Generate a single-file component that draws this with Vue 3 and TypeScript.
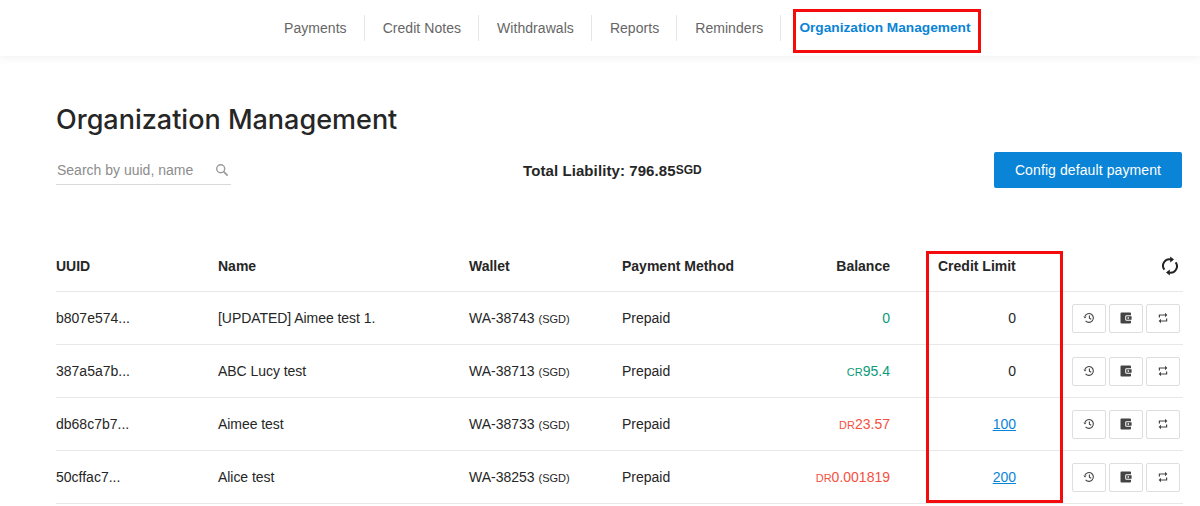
<script setup lang="ts">
interface Row {
  uuid: string
  name: string
  wallet: string
  prefix: string
  balance: string
  tone: string
  limit: string
  linked: boolean
}
const tabs: string[] = ['Payments', 'Credit Notes', 'Withdrawals', 'Reports', 'Reminders']
const rows: Row[] = [
  { uuid: 'b807e574...', name: '[UPDATED] Aimee test 1.', wallet: 'WA-38743', prefix: '', balance: '0', tone: 'pos', limit: '0', linked: false },
  { uuid: '387a5a7b...', name: 'ABC Lucy test', wallet: 'WA-38713', prefix: 'CR', balance: '95.4', tone: 'pos', limit: '0', linked: false },
  { uuid: 'db68c7b7...', name: 'Aimee test', wallet: 'WA-38733', prefix: 'DR', balance: '23.57', tone: 'neg', limit: '100', linked: true },
  { uuid: '50cffac7...', name: 'Alice test', wallet: 'WA-38253', prefix: 'DR', balance: '0.001819', tone: 'neg', limit: '200', linked: true },
]
</script>

<template>
  <div class="page">
    <nav class="nav">
      <a v-for="t in tabs" :key="t" class="tab">{{ t }}</a>
      <a class="tab active">Organization Management</a>
    </nav>
    <div class="mark mark-nav"></div>
    <div class="mark mark-col"></div>

    <main class="content">
      <h1 class="title">Organization Management</h1>
      <div class="toolbar">
        <div class="search">
          <span class="placeholder">Search by uuid, name</span>
          <svg width="14" height="14" viewBox="0 0 14 14" fill="none" stroke="#9a9a9a" stroke-width="1.4">
            <circle cx="5.7" cy="5.7" r="4" />
            <path d="M8.7 8.7 L12.6 12.6" stroke-width="1.7" />
          </svg>
        </div>
        <div class="total">Total Liability: 796.85<span class="cur">SGD</span></div>
        <button class="primary">Config default payment</button>
      </div>

      <div class="table">
        <div class="row head">
          <div>UUID</div>
          <div>Name</div>
          <div>Wallet</div>
          <div>Payment Method</div>
          <div class="right">Balance</div>
          <div class="limit-head">Credit Limit</div>
          <div class="actions">
            <svg class="sync" width="16" height="20" viewBox="0 0 16 20" fill="none" stroke="#222" stroke-width="2">
              <path d="M2.4 13.6 A6.4 6.4 0 0 1 9.4 3.6" />
              <path d="M13.6 6.4 A6.4 6.4 0 0 1 6.6 16.4" />
              <path d="M8.2 0.4 L12 3.6 L8.2 6.6 Z" fill="#222" stroke="none" />
              <path d="M7.8 13.4 L4 16.4 L7.8 19.6 Z" fill="#222" stroke="none" />
            </svg>
          </div>
        </div>
        <div v-for="r in rows" :key="r.uuid" class="row body">
          <div>{{ r.uuid }}</div>
          <div class="name">{{ r.name }}</div>
          <div>{{ r.wallet }} <span class="small">(SGD)</span></div>
          <div>Prepaid</div>
          <div class="right" :class="r.tone"><span class="prefix">{{ r.prefix }}</span>{{ r.balance }}</div>
          <div class="right limit"><a v-if="r.linked" class="link">{{ r.limit }}</a><template v-else>{{ r.limit }}</template></div>
          <div class="actions">
            <button class="icon" aria-label="history">
              <svg width="12" height="12" viewBox="0 0 12 12" fill="none" stroke="#444" stroke-width="1.1">
                <path d="M2 4 A4.4 4.4 0 1 1 2.6 8.8" />
                <path d="M0.3 4.6 L3.6 4.6 L2 6.6 Z" fill="#444" stroke="none" />
                <path d="M6.4 3.4 V6.2 L8.2 7.3" />
              </svg>
            </button>
            <button class="icon" aria-label="wallet">
              <svg width="12" height="12" viewBox="0 0 12 12">
                <path d="M0.5 1.6 A1 1 0 0 1 1.5 0.6 H10 A1 1 0 0 1 11 1.6 V3.2 H6.6 A1.4 1.4 0 0 0 5.2 4.6 V7.4 A1.4 1.4 0 0 0 6.6 8.8 H11 V10.4 A1 1 0 0 1 10 11.4 H1.5 A1 1 0 0 1 0.5 10.4 Z" fill="#444" />
                <path d="M6.2 4.2 H11.6 V7.8 H6.2 Z M7.6 5.3 V6.7 H9 V5.3 Z" fill="#444" fill-rule="evenodd" />
              </svg>
            </button>
            <button class="icon" aria-label="transfer">
              <svg width="12" height="12" viewBox="0 0 12 12" fill="none" stroke="#444" stroke-width="1.2">
                <path d="M2.4 5.6 V3 H9" />
                <path d="M8 0.8 L10.4 3 L8 5.2 Z" fill="#444" stroke="none" />
                <path d="M9.6 6.4 V9 H3" />
                <path d="M4 6.8 L1.6 9 L4 11.2 Z" fill="#444" stroke="none" />
              </svg>
            </button>
          </div>
        </div>
      </div>
    </main>
  </div>
</template>

<style>
html, body { margin: 0; background: #fff; }
</style>

<style scoped>
.page {
  position: relative;
  width: 1200px;
  height: 506px;
  overflow: hidden;
  font-family: "Liberation Sans", Arial, sans-serif;
  font-size: 14px;
  color: #262626;
  background: #fff;
}
.nav {
  height: 56px;
  display: flex;
  align-items: center;
  justify-content: flex-start;
  box-shadow: 0 2px 8px rgba(0, 0, 0, 0.06);
  padding-left: 266px;
}
.tab {
  padding: 0 17px 0 18px;
  height: 26px;
  line-height: 26px;
  color: #666;
  letter-spacing: 0.05px;
  border-right: 1px solid #e6e6e6;
}
.tab.active {
  border-right: none;
  padding-left: 18px;
  color: #0a84d6;
  font-weight: bold;
  font-size: 13.7px;
  letter-spacing: 0;
}
.mark {
  position: absolute;
  border: 3px solid #f40c0c;
  box-sizing: border-box;
  pointer-events: none;
}
.mark-nav { left: 793px; top: 9px; width: 188px; height: 44px; }
.mark-col { left: 926px; top: 251px; width: 137px; height: 252px; }
.content {
  padding: 0 17px 0 56px;
}
.title {
  margin: 47px 0 0;
  font-family: Inter, "Liberation Sans", sans-serif;
  font-size: 27px;
  line-height: 34px;
  font-weight: 500;
  color: #262626;
}
.toolbar {
  display: flex;
  align-items: center;
  margin-top: 15px;
  height: 36px;
}
.search {
  box-sizing: border-box;
  width: 175px;
  height: 28px;
  margin-top: 1px;
  display: flex;
  align-items: center;
  justify-content: space-between;
  border-bottom: 1px solid #d9d9d9;
  padding: 0 2px 0 1px;
}
.placeholder { color: #8c8c8c; }
.total {
  font-size: 15px;
  font-weight: bold;
  margin-left: 292px;
  letter-spacing: 0.09px;
  white-space: nowrap;
}
.cur { font-size: 12px; position: relative; top: -2px; letter-spacing: 0; }
.primary {
  width: 188px;
  height: 36px;
  margin-left: auto;
  margin-right: 1px;
  border: none;
  border-radius: 2px;
  background: #0a84d6;
  color: #fff;
  font: 14px "Liberation Sans", Arial, sans-serif;
  letter-spacing: 0.1px;
}
.table { margin-top: 51px; }
.row {
  display: grid;
  grid-template-columns: 162px 251px 153px 130px 138px 126px 167px;
  align-items: center;
  border-bottom: 1px solid #e8e8e8;
  box-sizing: border-box;
  height: 53px;
}
.head {
  height: 53px;
  padding-top: 2px;
  font-weight: bold;
  font-size: 14px;
}
.name { letter-spacing: -0.05px; }
.right { text-align: right; }
.limit-head { padding-left: 48px; white-space: nowrap; }
.small { font-size: 11px; }
.prefix { font-size: 11px; }
.pos { color: #0a9a78; }
.neg { color: #f5503f; }
.link { color: #0a84d6; text-decoration: underline; }
.actions {
  display: flex;
  align-items: center;
  justify-content: flex-end;
  gap: 3px;
  padding-right: 3px;
}
.sync { margin-right: 2px; }
.icon {
  box-sizing: border-box;
  width: 34px;
  height: 29px;
  padding: 0;
  display: flex;
  align-items: center;
  justify-content: center;
  background: #fff;
  border: 1px solid #dedede;
  border-radius: 2px;
}
</style>
